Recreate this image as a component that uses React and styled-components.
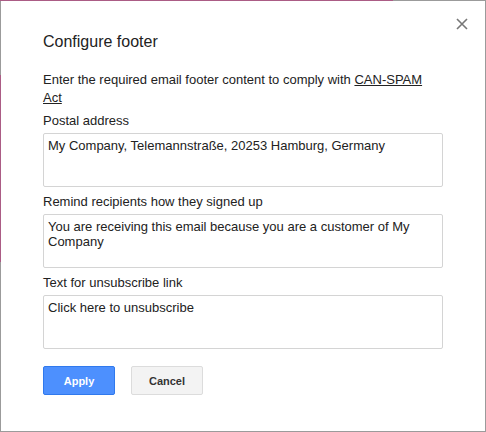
import styled, { createGlobalStyle } from "styled-components";

const GlobalStyle = createGlobalStyle`
    html, body {
        margin: 0;
        padding: 0;
        background: #ffffff;
    }
    * {
        box-sizing: border-box;
    }
`;

// the 1px edge shows the page behind the dialog, partly pink, partly grey
const Frame = styled.div`
    width: 486px;
    height: 432px;
    padding: 1px;
    background:
        linear-gradient(to right, #ab5c85 393px, #9b9b9b 393px) top / 100% 1px no-repeat,
        linear-gradient(to bottom, #9b9b9b 75px, #ab5c85 75px, #ab5c85 262px, #9b9b9b 262px) left / 1px 100% no-repeat,
        #9b9b9b;
`;

const Dialog = styled.div`
    position: relative;
    height: 100%;
    background: #ffffff;
    padding: 32px 42px 0;
    display: flex;
    flex-direction: column;
    font-family: Arial, "Liberation Sans", sans-serif;
    color: #222222;
`;

const CloseButton = styled.button`
    position: absolute;
    top: 16px;
    right: 16px;
    width: 14px;
    height: 14px;
    padding: 0;
    border: none;
    background: transparent;
    cursor: pointer;
    display: flex;
    align-items: center;
    justify-content: center;
`;

const Title = styled.h2`
    margin: 0;
    font-size: 16px;
    line-height: 18px;
    font-weight: normal;
`;

const Description = styled.p`
    margin: 20px 0 0;
    font-size: 13px;
    line-height: 18px;
`;

const Link = styled.a`
    color: #222222;
    text-decoration: underline;
`;

const Fields = styled.div`
    margin-top: 5px;
    display: flex;
    flex-direction: column;
    gap: 6px;
`;

const Field = styled.div`
    display: flex;
    flex-direction: column;
    gap: 3px;
`;

const Label = styled.label`
    font-size: 13px;
    line-height: 18px;
`;

const TextArea = styled.textarea`
    width: 100%;
    height: 54px;
    margin: 0;
    padding: 4px;
    border: 1px solid #d4d4d4;
    border-radius: 2px;
    resize: none;
    outline: none;
    font-family: Arial, "Liberation Sans", sans-serif;
    font-size: 13px;
    line-height: 15px;
    color: #222222;
    overflow: hidden;
`;

const Actions = styled.div`
    margin-top: 17px;
    display: flex;
    gap: 16px;
`;

const Button = styled.button`
    min-width: 72px;
    height: 29px;
    padding: 0 8px;
    border-radius: 2px;
    border: 1px solid ${({ $primary }) => ($primary ? '#3079ed' : '#dcdcdc')};
    background: ${({ $primary }) => ($primary ? '#4d90fe' : '#f3f3f3')};
    color: ${({ $primary }) => ($primary ? '#ffffff' : '#333333')};
    font-family: Arial, "Liberation Sans", sans-serif;
    font-size: 11px;
    font-weight: bold;
    cursor: pointer;
`;

const fields = [
    { id: "postal", label: "Postal address", value: "My Company, Telemannstraße, 20253 Hamburg, Germany" },
    { id: "remind", label: "Remind recipients how they signed up", value: "You are receiving this email because you are a customer of My Company" },
    { id: "unsub", label: "Text for unsubscribe link", value: "Click here to unsubscribe" },
];

const App = () => {
    return (
        <>
            <GlobalStyle />
            <Frame>
                <Dialog>
                    <CloseButton aria-label="Close">
                        <svg width="12" height="12" viewBox="0 0 12 12">
                            <path d="M1 1 L11 11 M11 1 L1 11" stroke="#777777" strokeWidth="1.6" fill="none" />
                        </svg>
                    </CloseButton>
                    <Title>Configure footer</Title>
                    <Description>
                        Enter the required email footer content to comply with <Link href="#">CAN-SPAM Act</Link>
                    </Description>
                    <Fields>
                        {fields.map((field) => (
                            <Field key={field.id}>
                                <Label htmlFor={field.id}>{field.label}</Label>
                                <TextArea id={field.id} defaultValue={field.value} />
                            </Field>
                        ))}
                    </Fields>
                    <Actions>
                        <Button $primary>Apply</Button>
                        <Button>Cancel</Button>
                    </Actions>
                </Dialog>
            </Frame>
        </>
    );
};

export default App;
